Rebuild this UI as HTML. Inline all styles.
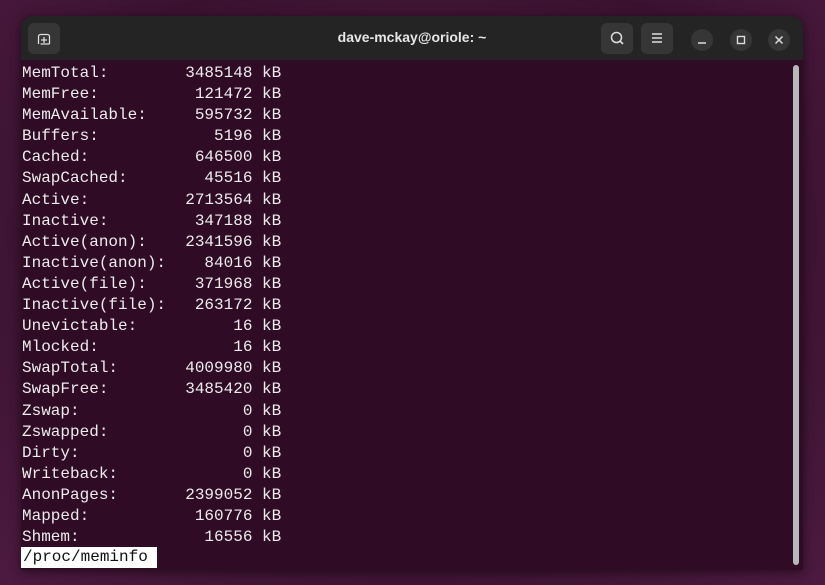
<!DOCTYPE html>
<html><head><meta charset="utf-8"><style>
html,body{margin:0;padding:0;width:825px;height:585px;overflow:hidden;}
body{background:radial-gradient(ellipse at 50% 40%,#4a1a3a 0%,#3a1230 60%,#4d1a40 100%);font-family:"Liberation Sans",sans-serif;position:relative;}
.win{position:absolute;left:21px;top:16px;width:782px;height:554px;border-radius:12px 12px 0 0;overflow:hidden;background:#2f0b25;box-shadow:0 2px 10px rgba(0,0,0,.5);}
.hdr{position:absolute;left:0;top:0;width:782px;height:44px;background:#242424;}
.title{position:absolute;left:0;right:0;top:13px;text-align:center;color:#e6e6e6;font-weight:bold;font-size:14px;}
.btn{position:absolute;top:7px;width:32px;height:31px;border-radius:6px;background:#363636;}
.cb{position:absolute;top:13px;width:22px;height:22px;border-radius:50%;background:#363636;}
.term{position:absolute;left:1px;top:47px;font-family:"Liberation Mono",monospace;font-size:16px;line-height:21.1px;color:#ececec;white-space:pre;}
.status{position:absolute;left:0;top:531px;width:136px;height:21px;background:#fff;color:#111;font-family:"Liberation Mono",monospace;font-size:16px;line-height:21px;padding-left:2px;box-sizing:border-box;}
.sb{position:absolute;left:772px;top:49px;width:6px;height:500px;border-radius:3px;background:#b8b8b8;}
</style></head><body>
<div class="win">
<div class="hdr">
<div class="btn" style="left:7px"><svg width="32" height="31" viewBox="0 0 32 31"><path d="M10.5 21V13.5a2 2 0 0 1 2-2h7a2 2 0 0 1 2 2V21M12.5 21h9M16 14v6M13 17h6" fill="none" stroke="#ddd" stroke-width="1.3"/></svg></div>
<div class="title">dave-mckay@oriole: ~</div>
<div class="btn" style="left:580px"><svg width="32" height="31" viewBox="0 0 32 31"><circle cx="15.5" cy="14.5" r="5" fill="none" stroke="#ddd" stroke-width="1.5"/><path d="M19 18l3 3" stroke="#ddd" stroke-width="1.6"/></svg></div>
<div class="btn" style="left:620px"><svg width="32" height="31" viewBox="0 0 32 31"><path d="M11 11h10M11 15h10M11 19h10" stroke="#ddd" stroke-width="1.5"/></svg></div>
<div class="cb" style="left:670px"><svg width="22" height="22"><path d="M7 14h8" stroke="#ddd" stroke-width="1.5"/></svg></div>
<div class="cb" style="left:709px"><svg width="22" height="22"><rect x="7.5" y="7.5" width="7" height="7" fill="none" stroke="#ddd" stroke-width="1.4"/></svg></div>
<div class="cb" style="left:747px"><svg width="22" height="22"><path d="M7.5 7.5l7 7M14.5 7.5l-7 7" stroke="#ddd" stroke-width="1.5"/></svg></div>
</div>
<div class="term">MemTotal:        3485148 kB
MemFree:          121472 kB
MemAvailable:     595732 kB
Buffers:            5196 kB
Cached:           646500 kB
SwapCached:        45516 kB
Active:          2713564 kB
Inactive:         347188 kB
Active(anon):    2341596 kB
Inactive(anon):    84016 kB
Active(file):     371968 kB
Inactive(file):   263172 kB
Unevictable:          16 kB
Mlocked:              16 kB
SwapTotal:       4009980 kB
SwapFree:        3485420 kB
Zswap:                 0 kB
Zswapped:              0 kB
Dirty:                 0 kB
Writeback:             0 kB
AnonPages:       2399052 kB
Mapped:           160776 kB
Shmem:             16556 kB</div>
<div class="status">/proc/meminfo</div>
<div class="sb"></div>
</div>
</body></html>
